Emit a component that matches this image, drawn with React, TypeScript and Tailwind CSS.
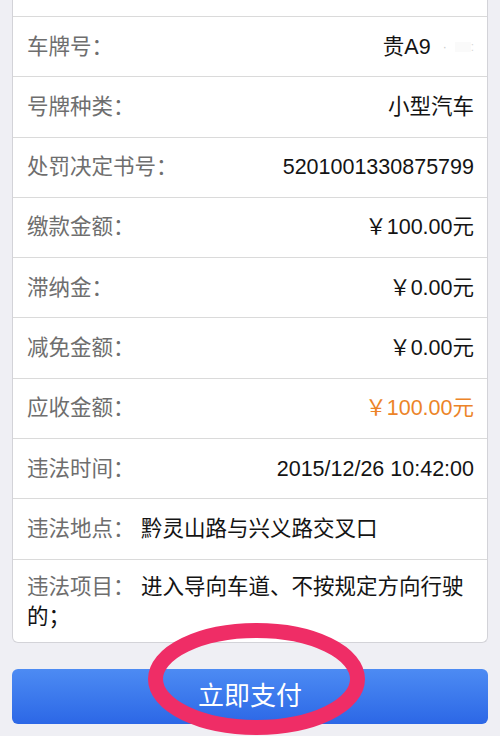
import React from "react";

const FONT = { fontFamily: '"Liberation Sans", "Noto Sans CJK SC", sans-serif' };

type Row = { label: string; value: React.ReactNode; orange?: boolean };

const rows: Row[] = [
  {
    label: "车牌号：",
    value: (
      <span className="flex items-center">
        <span>贵A9</span>
        <span className="ml-[12px] text-[12px] text-[#c8c8c8]">·</span>
        <span className="ml-[8px] w-[16px] h-[10px] bg-[#fafafa]" />
        <span className="text-[12px] text-[#d8d8d8]">:</span>
      </span>
    ),
  },
  { label: "号牌种类：", value: "小型汽车" },
  { label: "处罚决定书号：", value: "5201001330875799" },
  { label: "缴款金额：", value: "￥100.00元" },
  { label: "滞纳金：", value: "￥0.00元" },
  { label: "减免金额：", value: "￥0.00元" },
  { label: "应收金额：", value: "￥100.00元", orange: true },
  { label: "违法时间：", value: "2015/12/26 10:42:00" },
];

export default function App() {
  return (
    <div
      className="relative w-[500px] h-[736px] overflow-hidden bg-[#efeff4]"
      style={FONT}
    >
      <div className="mx-[12px] bg-white border-x border-b border-[#d3d3d8] rounded-b-[6px] text-[21.5px]">
        <div className="h-[17px] border-b border-[#dadada]" />
        {rows.map((r) => (
          <div
            key={r.label}
            className="h-[60.3px] flex items-center justify-between pl-[14px] pr-[13px] border-b border-[#dadada]"
          >
            <span className="text-[#6e6e6e]">{r.label}</span>
            <span className={r.orange ? "text-[#ec8428]" : "text-[#141414]"}>
              {r.value}
            </span>
          </div>
        ))}
        <div className="h-[60.3px] flex items-center pl-[14px] pr-[13px] border-b border-[#dadada]">
          <span className="w-[114px] shrink-0 text-[#6e6e6e]">违法地点：</span>
          <span className="text-[#141414]">黔灵山路与兴义路交叉口</span>
        </div>
        <div className="pl-[14px] pr-[13px] pt-[12px] pb-[10px] leading-[30px] text-[#141414]">
          <div className="flex">
            <span className="w-[114px] shrink-0 text-[#6e6e6e]">违法项目：</span>
            <span>进入导向车道、不按规定方向行驶</span>
          </div>
          <div>的；</div>
        </div>
      </div>

      <div className="mx-[12px] mt-[26px] h-[55px] rounded-[6px] bg-gradient-to-b from-[#4d8bf3] to-[#2c67e6] flex items-center justify-center text-white text-[26px]">
        立即支付
      </div>

      <svg
        className="absolute left-0 top-0 pointer-events-none"
        width="500"
        height="736"
        viewBox="0 0 500 736"
      >
        <ellipse
          cx="256.5"
          cy="679"
          rx="101"
          ry="48.5"
          fill="none"
          stroke="#ef2d66"
          strokeWidth="15"
        />
      </svg>
    </div>
  );
}
